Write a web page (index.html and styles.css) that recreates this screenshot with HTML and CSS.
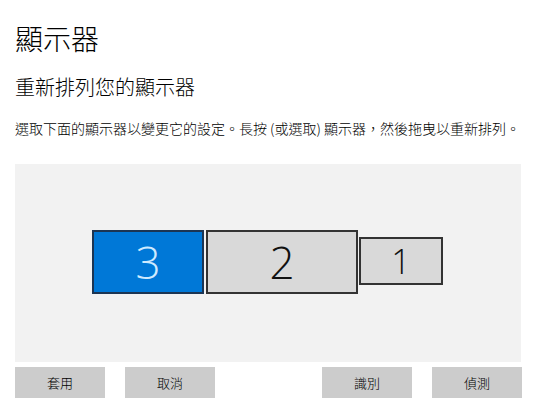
FILE: index.html
```html
<!DOCTYPE html>
<html lang="zh-Hant">
<head>
<meta charset="utf-8">
<title>顯示器</title>
<link rel="stylesheet" href="styles.css">
</head>
<body>
<div class="page">
  <h1 class="title">顯示器</h1>
  <h2 class="subtitle">重新排列您的顯示器</h2>
  <p class="desc">選取下面的顯示器以變更它的設定。長按 (或選取) 顯示器，然後拖曳以重新排列。</p>
  <div class="canvas">
    <div class="monitor m3 selected">3</div>
    <div class="monitor m2">2</div>
    <div class="monitor m1">1</div>
  </div>
  <div class="actions">
    <div class="group">
      <button class="btn">套用</button>
      <button class="btn">取消</button>
    </div>
    <div class="group">
      <button class="btn">識別</button>
      <button class="btn">偵測</button>
    </div>
  </div>
</div>
</body>
</html>
```
FILE: styles.css
```css
html, body {
  margin: 0;
  padding: 0;
  background: #ffffff;
}
body {
  font-family: "Noto Sans CJK TC", "Noto Sans", sans-serif;
  color: #000000;
}
.page {
  padding: 24px 0 0 15px;
  width: 507px;
}
.title {
  margin: 0;
  font-size: 28px;
  line-height: 28px;
  font-weight: 300;
}
.subtitle {
  margin: 25px 0 0 0;
  font-size: 20px;
  line-height: 20px;
  font-weight: 300;
}
.desc {
  margin: 24px 0 0 0;
  font-size: 14px;
  line-height: 14px;
  font-weight: 300;
  white-space: nowrap;
}
.canvas {
  position: relative;
  margin-top: 29px;
  width: 506px;
  height: 198px;
  background: #f2f2f2;
}
.monitor {
  position: absolute;
  box-sizing: border-box;
  border: 2px solid #333333;
  background: #d9d9d9;
  display: flex;
  align-items: center;
  justify-content: center;
  font-family: "Open Sans", "Noto Sans", sans-serif;
  font-weight: 300;
  color: #111111;
}
.m3 {
  left: 77px;
  top: 66px;
  width: 112px;
  height: 64px;
  font-size: 44px;
}
.selected {
  background: #0078d7;
  border-color: #1c3553;
  color: #cfeaff;
}
.m2 {
  left: 191px;
  top: 66px;
  width: 152px;
  height: 64px;
  font-size: 44px;
}
.m1 {
  left: 344px;
  top: 73px;
  width: 84px;
  height: 48px;
  font-size: 34px;
}
.actions {
  margin-top: 5px;
  display: flex;
  justify-content: space-between;
}
.group {
  display: flex;
  gap: 20px;
}
.btn {
  width: 90px;
  height: 31px;
  border: none;
  margin: 0;
  padding: 0;
  background: #cccccc;
  font-family: "Noto Sans CJK TC", sans-serif;
  font-size: 13px;
  font-weight: 300;
  color: #000000;
}
```
